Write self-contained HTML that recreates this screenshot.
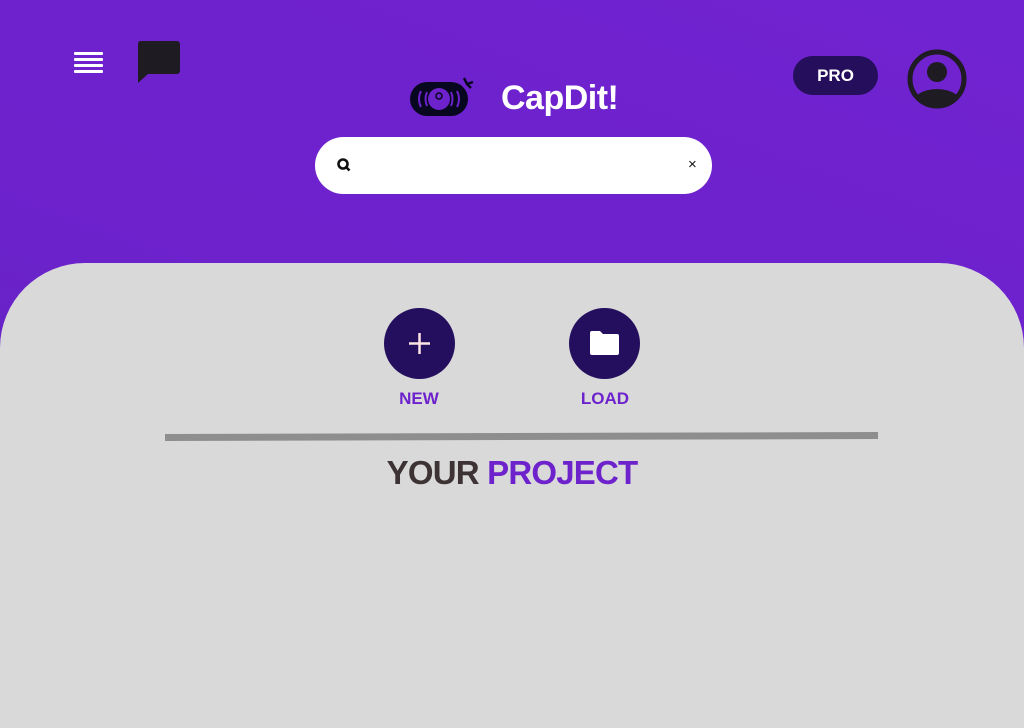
<!DOCTYPE html>
<html style="width:1024px;height:728px;overflow:hidden"><head><meta charset="utf-8"><style>
*{margin:0;padding:0;box-sizing:border-box}
body{width:1024px;height:728px;overflow:hidden;position:relative;font-family:"Liberation Sans",sans-serif;background:linear-gradient(200deg,#7023d0 0%,#6d22cc 50%,#5a25b8 100%)}
.panel{position:absolute;left:0;top:263px;width:1024px;height:465px;background:#d9d9d9;border-radius:85px 85px 0 0}
.abs{position:absolute}
.circ{position:absolute;width:71px;height:71px;border-radius:50%;background:#240f5e}
.lbl{position:absolute;color:#6d22cc;font-weight:bold;font-size:17px;text-align:center;width:100px}
.hb{width:29px;height:3px;background:#fff;margin-bottom:3px;border-radius:1px}
</style></head><body>
<div class="abs" style="left:74px;top:52px">
<div class="hb"></div><div class="hb"></div><div class="hb"></div><div class="hb"></div>
</div>
<svg class="abs" style="left:137px;top:40px" width="44" height="44"><path d="M3 1h37a3 3 0 0 1 3 3v27a3 3 0 0 1-3 3H11L1 43V4a3 3 0 0 1 2-3z" fill="#1e1b22"/></svg>
<svg class="abs" style="left:408px;top:74px" width="70" height="44">
<rect x="2" y="8" width="58" height="34" rx="17" fill="#070720"/>
<circle cx="31" cy="25" r="11" fill="#6d22cc"/>
<circle cx="31" cy="22" r="3" fill="none" stroke="#070720" stroke-width="1.5"/>
<path d="M13 17q-4 8 0 16M49 17q4 8 0 16M19 18q-3 7 0 14M43 18q3 7 0 14" stroke="#6d22cc" stroke-width="2" fill="none"/>
<path d="M56 4l3 6l6-2M59 10l4 4" stroke="#070720" stroke-width="2.5" fill="none"/>
</svg>
<div class="abs" style="left:501px;top:79px;color:#fff;font-weight:bold;font-size:34px;letter-spacing:-0.5px">CapDit!</div>
<div class="abs" style="left:793px;top:56px;width:85px;height:39px;border-radius:20px;background:#250f5c;color:#fff;font-size:17px;text-align:center;line-height:39px;font-weight:bold">PRO</div>
<svg class="abs" style="left:906px;top:48px" width="62" height="62"><defs><clipPath id="c"><circle cx="31" cy="31" r="25"/></clipPath></defs>
<circle cx="31" cy="31" r="27" fill="none" stroke="#1e1b22" stroke-width="5"/>
<circle cx="31" cy="24" r="10" fill="#1e1b22"/>
<ellipse cx="31" cy="58" rx="26" ry="17" fill="#1e1b22" clip-path="url(#c)"/></svg>
<div class="abs" style="left:315px;top:137px;width:397px;height:57px;background:#fff;border-radius:29px"></div>
<svg class="abs" style="left:336px;top:157px" width="16" height="16"><circle cx="7" cy="7" r="4.5" fill="none" stroke="#111" stroke-width="2.6"/><path d="M10 10l3.5 3.5" stroke="#111" stroke-width="2.6"/></svg>
<div class="abs" style="left:688px;top:156px;font-size:15px;color:#111">×</div>
<div class="panel"></div>
<div class="circ" style="left:384px;top:308px"></div>
<svg class="abs" style="left:407px;top:331px" width="25" height="25"><path d="M12.5 2v21M2 12.5h21" stroke="#fde4e4" stroke-width="2.5"/></svg>
<div class="circ" style="left:569px;top:308px"></div>
<svg class="abs" style="left:588px;top:330px" width="34" height="28"><path d="M2 3a2 2 0 0 1 2-2h8l3 3h14a2 2 0 0 1 2 2v17a2 2 0 0 1-2 2H4a2 2 0 0 1-2-2z" fill="#fff"/></svg>
<div class="lbl" style="left:369px;top:389px">NEW</div>
<div class="lbl" style="left:555px;top:389px">LOAD</div>
<svg class="abs" style="left:165px;top:432px" width="714" height="10"><polygon points="0,2 713,0 713,7 0,9" fill="#8e8e8e"/></svg>
<div class="abs" style="left:0;top:454px;width:1024px;text-align:center;font-weight:bold;font-size:33px;letter-spacing:-0.8px"><span style="color:#3d3334">YOUR </span><span style="color:#6d22cc">PROJECT</span></div>
</body></html>
